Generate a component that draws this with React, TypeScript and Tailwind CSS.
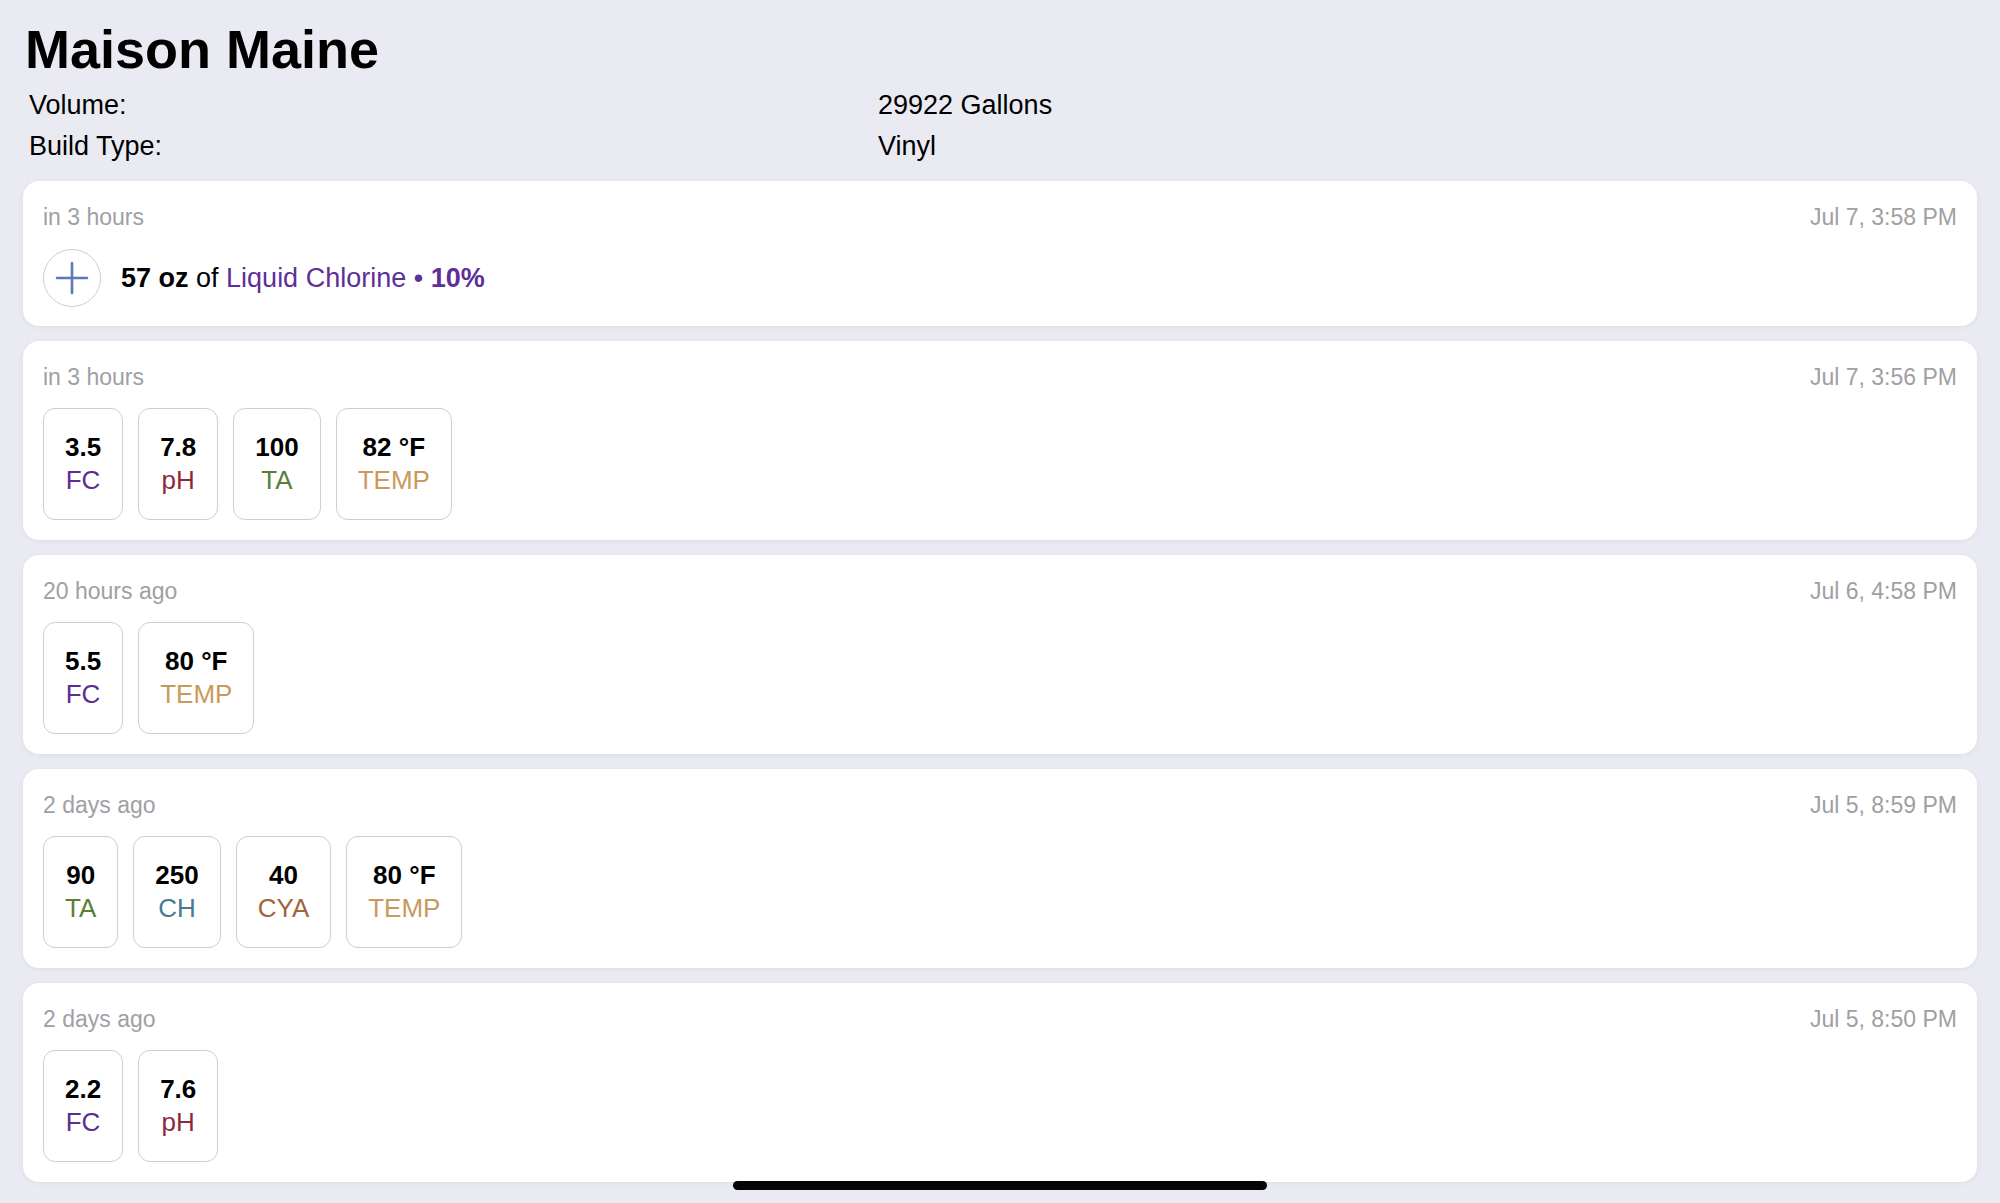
import React from "react";

type Reading = { value: string; label: string; color: string };

const FONT = { fontFamily: '"Liberation Sans", Arial, Helvetica, sans-serif' };

function Tile({ r }: { r: Reading }) {
  return (
    <div className="flex flex-col items-center rounded-[12px] border-[1.5px] border-[#cfcfd2] bg-white px-[21px] py-[22px] text-[26px] leading-[33px]">
      <div className="font-bold text-black">{r.value}</div>
      <div className={r.color}>{r.label}</div>
    </div>
  );
}

function Card({ rel, date, top, children }: { rel: string; date: string; top: string; children: React.ReactNode }) {
  return (
    <div className={`rounded-[16px] bg-white px-[20px] pt-[21px] shadow-[0_1px_4px_rgba(60,60,90,0.08)] ${top}`}>
      <div className="flex h-[30px] items-center justify-between text-[23px] text-[#a0a0a4]">
        <span>{rel}</span>
        <span>{date}</span>
      </div>
      {children}
    </div>
  );
}

const FC = "text-[#5b2d92]";
const PH = "text-[#8a2a3c]";
const TA = "text-[#5b7e36]";
const CH = "text-[#4a7a8e]";
const CYA = "text-[#a0653a]";
const TEMP = "text-[#c99a5c]";

const logs: { rel: string; date: string; readings: Reading[] }[] = [
  {
    rel: "in 3 hours",
    date: "Jul 7, 3:56 PM",
    readings: [
      { value: "3.5", label: "FC", color: FC },
      { value: "7.8", label: "pH", color: PH },
      { value: "100", label: "TA", color: TA },
      { value: "82 °F", label: "TEMP", color: TEMP },
    ],
  },
  {
    rel: "20 hours ago",
    date: "Jul 6, 4:58 PM",
    readings: [
      { value: "5.5", label: "FC", color: FC },
      { value: "80 °F", label: "TEMP", color: TEMP },
    ],
  },
  {
    rel: "2 days ago",
    date: "Jul 5, 8:59 PM",
    readings: [
      { value: "90", label: "TA", color: TA },
      { value: "250", label: "CH", color: CH },
      { value: "40", label: "CYA", color: CYA },
      { value: "80 °F", label: "TEMP", color: TEMP },
    ],
  },
  {
    rel: "2 days ago",
    date: "Jul 5, 8:50 PM",
    readings: [
      { value: "2.2", label: "FC", color: FC },
      { value: "7.6", label: "pH", color: PH },
    ],
  },
];

export default function App() {
  return (
    <div className="relative h-[1203px] w-[2000px] overflow-hidden bg-[#eaebf2]" style={FONT}>
      <div className="px-[23px] pt-[14px]">
        <h1 className="pl-[2px] text-[54px] font-bold leading-[70px] text-black">Maison Maine</h1>
        <div className="mt-[1px] grid grid-cols-[849px_1fr] pl-[6px] text-[27px] leading-[41px] text-black">
          <div>Volume:</div>
          <div>29922 Gallons</div>
          <div>Build Type:</div>
          <div>Vinyl</div>
        </div>
        <div className="mt-[14px] flex flex-col gap-[15px]">
          <Card rel="in 3 hours" date="Jul 7, 3:58 PM" top="pb-[19px]">
            <div className="mt-[17px] flex items-center gap-[20px]">
              <div className="flex h-[58px] w-[58px] items-center justify-center rounded-full border-[1.5px] border-[#cfcfd2]">
                <svg width="34" height="34" viewBox="0 0 34 34">
                  <path d="M17 2V32M2 17H32" stroke="#5c7ab5" strokeWidth="2.6" strokeLinecap="round" />
                </svg>
              </div>
              <div className="text-[27px] text-black">
                <span className="font-bold">57 oz</span> of{" "}
                <span className="text-[#5e2f98]">Liquid Chlorine</span>
                <span className="text-[#5e2f98]"> • </span>
                <span className="font-bold text-[#5e2f98]">10%</span>
              </div>
            </div>
          </Card>
          {logs.map((l, i) => (
            <Card key={i} rel={l.rel} date={l.date} top="pb-[20px]">
              <div className="mt-[16px] flex gap-[15px]">
                {l.readings.map((r, j) => (
                  <Tile key={j} r={r} />
                ))}
              </div>
            </Card>
          ))}
        </div>
      </div>
      <div className="absolute left-[733px] top-[1181px] h-[9px] w-[534px] rounded-full bg-[#050507]" />
    </div>
  );
}
